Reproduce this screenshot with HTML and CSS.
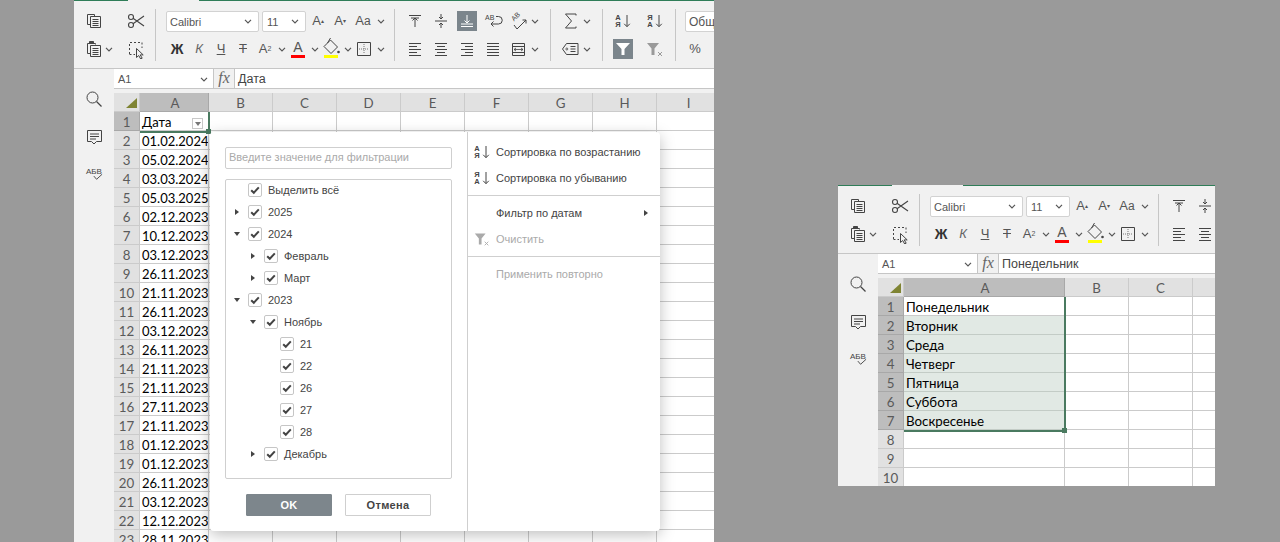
FILE: index.html
```html
<!DOCTYPE html>
<html lang="ru">
<head>
<meta charset="utf-8">
<title>Таблица</title>
<link rel="stylesheet" href="styles.css">
</head>
<body>
<svg class="defs" width="0" height="0" aria-hidden="true">
  <symbol id="chev" viewBox="0 0 8 5"><path d="M1 .8 4 3.8 7 .8" fill="none" stroke="currentColor" stroke-width="1.2"/></symbol>
  <symbol id="copy" viewBox="0 0 20 20"><g fill="none" stroke="currentColor"><path d="M6.500 13.500h-3v-10h7v2"/><path d="M6.500 5.500h10v11h-10z" fill="#f1f1f1"/><path d="M8.500 8.500h6M8.500 10.500h6M8.500 12.500h6M8.500 14.500h6"/></g></symbol>
  <symbol id="cut" viewBox="0 0 20 20"><g fill="none" stroke="currentColor" stroke-width="1.100"><circle cx="5" cy="6" r="2.500"/><circle cx="5" cy="14" r="2.500"/><path d="M7 7.200 18 15M7 12.800 18 5"/></g></symbol>
  <symbol id="paste" viewBox="0 0 20 20"><g fill="none" stroke="currentColor"><path d="M6.500 14.500h-3v-10h8v1"/><path d="M5.500 2.500h4v2h-4z" fill="currentColor"/><path d="M6.500 6.500h10v11h-10z" fill="#f1f1f1"/><path d="M8.500 9.500h6M8.500 11.500h6M8.500 13.500h6M8.500 15.500h6"/></g></symbol>
  <symbol id="selectall" viewBox="0 0 20 20"><path d="M3.500 15V3.500H16V9" fill="none" stroke="currentColor" stroke-dasharray="2 2"/><path d="M3.500 15.500H9" fill="none" stroke="currentColor" stroke-dasharray="2 2"/><path d="M10.500 9.500v9l2.200-2 2 3.500 1.500-.8-2-3.300h3z" fill="#f1f1f1" stroke="currentColor"/></symbol>
  <symbol id="fill" viewBox="0 0 20 20"><path d="M9.500 3 16.500 10 10 16.500 3 9.500z" fill="none" stroke="currentColor"/><path d="M6.500 6 9.500 1" stroke="currentColor"/><circle cx="17.500" cy="15" r="1.300" fill="currentColor"/></symbol>
  <symbol id="border" viewBox="0 0 20 20"><path d="M3.500 3.500h13v13h-13z" fill="none" stroke="currentColor"/><path d="M10 5v10M5 10h10" stroke="currentColor" stroke-dasharray="1 1" opacity=".7"/></symbol>
  <symbol id="atop" viewBox="0 0 20 20"><path d="M4 4.500h12M10 16V7M7.500 9.500 10 7l2.500 2.500M6 7h8" fill="none" stroke="currentColor"/></symbol>
  <symbol id="amid" viewBox="0 0 20 20"><path d="M4 10h12M10 3v5M8 6l2 2 2-2M10 17v-5M8 14l2-2 2 2" fill="none" stroke="currentColor"/></symbol>
  <symbol id="abot" viewBox="0 0 20 20"><path d="M4 15.500h12M4 13h12M10 4v8M7.500 9.500 10 12l2.500-2.500" fill="none" stroke="currentColor"/></symbol>
  <symbol id="wrap" viewBox="0 0 20 20"><text x="2" y="9" font-size="7" font-family="Liberation Sans, sans-serif" fill="currentColor">AB</text><path d="M13 5.500h2.500a3.500 3.500 0 0 1 0 7.500H8M10.500 10.500 8 13l2.500 2.500" fill="none" stroke="currentColor"/></symbol>
  <symbol id="orient" viewBox="0 0 20 20"><text x="0" y="0" transform="translate(5 10.500) rotate(-45)" font-size="7" font-family="Liberation Sans, sans-serif" fill="currentColor">AB</text><path d="M5 14l3 4M8 18l9-9M17 9h-3.500M17 9v3.500" fill="none" stroke="currentColor"/></symbol>
  <symbol id="aleft" viewBox="0 0 20 20"><path d="M4 4.500h12M4 7.500h8M4 10.500h12M4 13.500h8M4 16.500h12" fill="none" stroke="currentColor"/></symbol>
  <symbol id="acenter" viewBox="0 0 20 20"><path d="M4 4.500h12M6 7.500h8M4 10.500h12M6 13.500h8M4 16.500h12" fill="none" stroke="currentColor"/></symbol>
  <symbol id="aright" viewBox="0 0 20 20"><path d="M4 4.500h12M8 7.500h8M4 10.500h12M8 13.500h8M4 16.500h12" fill="none" stroke="currentColor"/></symbol>
  <symbol id="ajust" viewBox="0 0 20 20"><path d="M4 4.500h12M4 7.500h12M4 10.500h12M4 13.500h12M4 16.500h12" fill="none" stroke="currentColor"/></symbol>
  <symbol id="merge" viewBox="0 0 20 20"><path d="M3.500 4.500h12v12h-12zM3.500 7.500h12M3.500 13.500h12" fill="none" stroke="currentColor"/><path d="M5 10.500h9M7 9 5 10.500 7 12M12 9l2 1.500-2 1.500" fill="none" stroke="currentColor" stroke-width=".8"/></symbol>
  <symbol id="sum" viewBox="0 0 20 20"><path d="M15 4.500V3H4.500L10.500 10l-6 7H15v-1.500" fill="none" stroke="currentColor"/></symbol>
  <symbol id="tag" viewBox="0 0 20 20"><path d="M5.500 4.500h11.500v11H5.500L1.500 10z" fill="none" stroke="currentColor"/><path d="M9.500 7.500h5M9.500 10h5M9.500 12.500h5" stroke="currentColor"/><circle cx="5.800" cy="10" r="1" fill="none" stroke="currentColor" stroke-width=".8"/></symbol>
  <symbol id="funnel" viewBox="0 0 20 20"><path d="M3 4h14l-5.500 6v6h-3v-6z" fill="currentColor"/></symbol>
  <symbol id="funnelx" viewBox="0 0 20 20"><path d="M2 4h12L9.500 9.500V16h-3V9.500z" fill="currentColor"/><path d="M13 13l4 4M17 13l-4 4" stroke="currentColor" fill="none"/></symbol>
  <symbol id="search" viewBox="0 0 20 20"><circle cx="8.500" cy="8.500" r="5.500" fill="none" stroke="currentColor"/><path d="M12.500 12.500 17.500 17.500" stroke="currentColor" stroke-width="1.200"/></symbol>
  <symbol id="comment" viewBox="0 0 20 20"><path d="M3.500 3.500h14v11h-5L10 17l-2.500-2.500h-4z" fill="none" stroke="currentColor"/><path d="M6 7h9M6 9.500h9M6 12h6" stroke="currentColor"/></symbol>
  <symbol id="check" viewBox="0 0 14 14"><path d="M3.200 7.200 5.800 9.800 10.800 4.400" fill="none" stroke="currentColor" stroke-width="2"/></symbol>
  <symbol id="arrdown" viewBox="0 0 8 14"><path d="M4 1v11.500M1.200 9.800 4 12.700l2.800-2.900" fill="none" stroke="currentColor"/></symbol>
</svg>

<main class="stage">
  <section class="pane pane-left">
    <div class="topline"><i class="tl-a"></i><i class="tl-gap"></i><i class="tl-b"></i></div>
    <div class="toolbar">
      <div class="group g-clip">
        <div class="tool"><svg class="ic"><use href="#copy"/></svg></div><span></span><div class="tool"><svg class="ic"><use href="#cut"/></svg></div>
        <div class="tool"><svg class="ic"><use href="#paste"/></svg></div><span class="chev"><svg><use href="#chev"/></svg></span><div class="tool"><svg class="ic"><use href="#selectall"/></svg></div>
      </div>
      <div class="group g-font">
        <div class="row">
          <div class="combo c-font">Calibri<svg><use href="#chev"/></svg></div>
          <div class="combo c-size">11<svg><use href="#chev"/></svg></div>
          <div class="tool t22 glyph big">A<sup>▴</sup></div>
          <div class="tool t22 glyph">A<sup>▾</sup></div>
          <div class="tool t24 glyph big">A<small>a</small></div><span class="chev"><svg><use href="#chev"/></svg></span>
        </div>
        <div class="row">
          <div class="tool t22 glyph bold">Ж</div>
          <div class="tool t22 glyph ital">К</div>
          <div class="tool t22 glyph under">Ч</div>
          <div class="tool t22 glyph strike">Т</div>
          <div class="tool t22 glyph">A<sub>2</sub></div><span class="chev"><svg><use href="#chev"/></svg></span>
          <div class="tool t22 colored"><span class="glyph">A</span><i class="bar red"></i></div><span class="chev"><svg><use href="#chev"/></svg></span>
          <div class="tool t22 colored"><svg class="ic ic-up"><use href="#fill"/></svg><i class="bar yellow"></i></div><span class="chev"><svg><use href="#chev"/></svg></span>
          <div class="tool t22"><svg class="ic"><use href="#border"/></svg></div><span class="chev"><svg><use href="#chev"/></svg></span>
        </div>
      </div>
      <div class="group g-align">
        <div class="row">
          <div class="tool t26"><svg class="ic"><use href="#atop"/></svg></div>
          <div class="tool t26"><svg class="ic"><use href="#amid"/></svg></div>
          <div class="tool t26"><span class="active"><svg class="ic"><use href="#abot"/></svg></span></div>
          <div class="tool t26"><svg class="ic"><use href="#wrap"/></svg></div>
          <div class="tool t26"><svg class="ic"><use href="#orient"/></svg></div><span class="chev narrow"><svg><use href="#chev"/></svg></span>
        </div>
        <div class="row">
          <div class="tool t26"><svg class="ic"><use href="#aleft"/></svg></div>
          <div class="tool t26"><svg class="ic"><use href="#acenter"/></svg></div>
          <div class="tool t26"><svg class="ic"><use href="#aright"/></svg></div>
          <div class="tool t26"><svg class="ic"><use href="#ajust"/></svg></div>
          <div class="tool t26"><svg class="ic"><use href="#merge"/></svg></div><span class="chev narrow"><svg><use href="#chev"/></svg></span>
        </div>
      </div>
      <div class="group g-sum">
        <div class="row"><div class="tool t26"><svg class="ic"><use href="#sum"/></svg></div><span class="chev narrow"><svg><use href="#chev"/></svg></span></div>
        <div class="row"><div class="tool t26"><svg class="ic"><use href="#tag"/></svg></div><span class="chev narrow"><svg><use href="#chev"/></svg></span></div>
      </div>
      <div class="group g-sort">
        <div class="row">
          <div class="tool t20 sorticon"><span class="az">A<br>Я</span><svg class="arr"><use href="#arrdown"/></svg></div>
          <div class="tool t20 sorticon"><span class="az">Я<br>A</span><svg class="arr"><use href="#arrdown"/></svg></div>
        </div>
        <div class="row">
          <div class="tool t20"><span class="active"><svg class="ic white"><use href="#funnel"/></svg></span></div>
          <div class="tool t20 muted"><svg class="ic"><use href="#funnelx"/></svg></div>
        </div>
      </div>
      <div class="group g-num">
        <div class="row"><div class="combo c-num">Общий</div></div>
        <div class="row"><div class="tool t20 glyph percent">%</div></div>
      </div>
    </div>
    <div class="workspace">
      <aside class="sidebar">
        <svg class="ic side-search"><use href="#search"/></svg>
        <svg class="ic side-comment"><use href="#comment"/></svg>
        <div class="side-spell">АБВ<svg viewBox="0 0 12 8"><path d="M2 3 5 6.500 11 1" fill="none" stroke="currentColor"/></svg></div>
      </aside>
      <div class="content">
        <div class="formula">
          <div class="namebox">A1<svg><use href="#chev"/></svg></div>
          <div class="fx">fx</div>
          <div class="fvalue">Дата</div>
        </div>
        <div class="strip"></div>
        <div class="sheet-wrap">
          <table class="sheet sheet-l">
            <colgroup><col class="c-h"><col class="c-a"><col class="c-n"><col class="c-n"><col class="c-n"><col class="c-n"><col class="c-n"><col class="c-n"><col class="c-n"><col class="c-n"></colgroup>
            <tr><th class="corner"><i></i></th><th class="on">A</th><th>B</th><th>C</th><th>D</th><th>E</th><th>F</th><th>G</th><th>H</th><th>I</th></tr>
            <tr><th class="on">1</th><td class="hascaret">Дата<span class="caret"></span></td><td></td><td></td><td></td><td></td><td></td><td></td><td></td><td></td></tr>
            <tr><th>2</th><td>01.02.2024</td><td></td><td></td><td></td><td></td><td></td><td></td><td></td><td></td></tr>
            <tr><th>3</th><td>05.02.2024</td><td></td><td></td><td></td><td></td><td></td><td></td><td></td><td></td></tr>
            <tr><th>4</th><td>03.03.2024</td><td></td><td></td><td></td><td></td><td></td><td></td><td></td><td></td></tr>
            <tr><th>5</th><td>05.03.2025</td><td></td><td></td><td></td><td></td><td></td><td></td><td></td><td></td></tr>
            <tr><th>6</th><td>02.12.2023</td><td></td><td></td><td></td><td></td><td></td><td></td><td></td><td></td></tr>
            <tr><th>7</th><td>10.12.2023</td><td></td><td></td><td></td><td></td><td></td><td></td><td></td><td></td></tr>
            <tr><th>8</th><td>03.12.2023</td><td></td><td></td><td></td><td></td><td></td><td></td><td></td><td></td></tr>
            <tr><th>9</th><td>26.11.2023</td><td></td><td></td><td></td><td></td><td></td><td></td><td></td><td></td></tr>
            <tr><th>10</th><td>21.11.2023</td><td></td><td></td><td></td><td></td><td></td><td></td><td></td><td></td></tr>
            <tr><th>11</th><td>26.11.2023</td><td></td><td></td><td></td><td></td><td></td><td></td><td></td><td></td></tr>
            <tr><th>12</th><td>03.12.2023</td><td></td><td></td><td></td><td></td><td></td><td></td><td></td><td></td></tr>
            <tr><th>13</th><td>26.11.2023</td><td></td><td></td><td></td><td></td><td></td><td></td><td></td><td></td></tr>
            <tr><th>14</th><td>21.11.2023</td><td></td><td></td><td></td><td></td><td></td><td></td><td></td><td></td></tr>
            <tr><th>15</th><td>21.11.2023</td><td></td><td></td><td></td><td></td><td></td><td></td><td></td><td></td></tr>
            <tr><th>16</th><td>27.11.2023</td><td></td><td></td><td></td><td></td><td></td><td></td><td></td><td></td></tr>
            <tr><th>17</th><td>21.11.2023</td><td></td><td></td><td></td><td></td><td></td><td></td><td></td><td></td></tr>
            <tr><th>18</th><td>01.12.2023</td><td></td><td></td><td></td><td></td><td></td><td></td><td></td><td></td></tr>
            <tr><th>19</th><td>01.12.2023</td><td></td><td></td><td></td><td></td><td></td><td></td><td></td><td></td></tr>
            <tr><th>20</th><td>26.11.2023</td><td></td><td></td><td></td><td></td><td></td><td></td><td></td><td></td></tr>
            <tr><th>21</th><td>03.12.2023</td><td></td><td></td><td></td><td></td><td></td><td></td><td></td><td></td></tr>
            <tr><th>22</th><td>12.12.2023</td><td></td><td></td><td></td><td></td><td></td><td></td><td></td><td></td></tr>
            <tr><th>23</th><td>28.11.2023</td><td></td><td></td><td></td><td></td><td></td><td></td><td></td><td></td></tr>
          </table>
          <div class="selection sel-left"><i></i></div>
        </div>
      </div>
    </div>

    <div class="dialog">
      <div class="dlg-main">
        <div class="dlg-search">Введите значение для фильтрации</div>
        <div class="tree">
          <div class="tree-in">
            <div class="node l0"><i class="tw"></i><span class="cb"><svg><use href="#check"/></svg></span>Выделить всё</div>
            <div class="node l0"><i class="tw closed"></i><span class="cb"><svg><use href="#check"/></svg></span>2025</div>
            <div class="node l0"><i class="tw open"></i><span class="cb"><svg><use href="#check"/></svg></span>2024</div>
            <div class="node l1"><i class="tw closed"></i><span class="cb"><svg><use href="#check"/></svg></span>Февраль</div>
            <div class="node l1"><i class="tw closed"></i><span class="cb"><svg><use href="#check"/></svg></span>Март</div>
            <div class="node l0"><i class="tw open"></i><span class="cb"><svg><use href="#check"/></svg></span>2023</div>
            <div class="node l1"><i class="tw open"></i><span class="cb"><svg><use href="#check"/></svg></span>Ноябрь</div>
            <div class="node l2"><i class="tw"></i><span class="cb"><svg><use href="#check"/></svg></span>21</div>
            <div class="node l2"><i class="tw"></i><span class="cb"><svg><use href="#check"/></svg></span>22</div>
            <div class="node l2"><i class="tw"></i><span class="cb"><svg><use href="#check"/></svg></span>26</div>
            <div class="node l2"><i class="tw"></i><span class="cb"><svg><use href="#check"/></svg></span>27</div>
            <div class="node l2"><i class="tw"></i><span class="cb"><svg><use href="#check"/></svg></span>28</div>
            <div class="node l1"><i class="tw closed"></i><span class="cb"><svg><use href="#check"/></svg></span>Декабрь</div>
          </div>
        </div>
        <div class="dlg-buttons">
          <button class="btn primary">OK</button>
          <button class="btn">Отмена</button>
        </div>
      </div>
      <div class="dlg-menu">
        <div class="mi"><span class="mi-ic sorticon"><span class="az">A<br>Я</span><svg class="arr"><use href="#arrdown"/></svg></span>Сортировка по возрастанию</div>
        <div class="mi"><span class="mi-ic sorticon"><span class="az">Я<br>A</span><svg class="arr"><use href="#arrdown"/></svg></span>Сортировка по убыванию</div>
        <hr class="sep">
        <div class="mi"><span class="mi-ic"></span>Фильтр по датам<i class="submenu"></i></div>
        <div class="mi off"><span class="mi-ic"><svg class="ic"><use href="#funnelx"/></svg></span>Очистить</div>
        <hr class="sep">
        <div class="mi off"><span class="mi-ic"></span>Применить повторно</div>
      </div>
    </div>
  </section>

  <section class="pane pane-right">
    <div class="topline"><i class="tl-a"></i><i class="tl-gap"></i><i class="tl-b"></i></div>
    <div class="toolbar">
      <div class="group g-clip">
        <div class="tool"><svg class="ic"><use href="#copy"/></svg></div><span></span><div class="tool"><svg class="ic"><use href="#cut"/></svg></div>
        <div class="tool"><svg class="ic"><use href="#paste"/></svg></div><span class="chev"><svg><use href="#chev"/></svg></span><div class="tool"><svg class="ic"><use href="#selectall"/></svg></div>
      </div>
      <div class="group g-font">
        <div class="row">
          <div class="combo c-font">Calibri<svg><use href="#chev"/></svg></div>
          <div class="combo c-size">11<svg><use href="#chev"/></svg></div>
          <div class="tool t22 glyph big">A<sup>▴</sup></div>
          <div class="tool t22 glyph">A<sup>▾</sup></div>
          <div class="tool t24 glyph big">A<small>a</small></div><span class="chev"><svg><use href="#chev"/></svg></span>
        </div>
        <div class="row">
          <div class="tool t22 glyph bold">Ж</div>
          <div class="tool t22 glyph ital">К</div>
          <div class="tool t22 glyph under">Ч</div>
          <div class="tool t22 glyph strike">Т</div>
          <div class="tool t22 glyph">A<sub>2</sub></div><span class="chev"><svg><use href="#chev"/></svg></span>
          <div class="tool t22 colored"><span class="glyph">A</span><i class="bar red"></i></div><span class="chev"><svg><use href="#chev"/></svg></span>
          <div class="tool t22 colored"><svg class="ic ic-up"><use href="#fill"/></svg><i class="bar yellow"></i></div><span class="chev"><svg><use href="#chev"/></svg></span>
          <div class="tool t22"><svg class="ic"><use href="#border"/></svg></div><span class="chev"><svg><use href="#chev"/></svg></span>
        </div>
      </div>
      <div class="group g-align">
        <div class="row">
          <div class="tool t26"><svg class="ic"><use href="#atop"/></svg></div>
          <div class="tool t26"><svg class="ic"><use href="#amid"/></svg></div>
        </div>
        <div class="row">
          <div class="tool t26"><svg class="ic"><use href="#aleft"/></svg></div>
          <div class="tool t26"><svg class="ic"><use href="#acenter"/></svg></div>
        </div>
      </div>
    </div>
    <div class="workspace">
      <aside class="sidebar">
        <svg class="ic side-search"><use href="#search"/></svg>
        <svg class="ic side-comment"><use href="#comment"/></svg>
        <div class="side-spell">АБВ<svg viewBox="0 0 12 8"><path d="M2 3 5 6.500 11 1" fill="none" stroke="currentColor"/></svg></div>
      </aside>
      <div class="content">
        <div class="formula">
          <div class="namebox">A1<svg><use href="#chev"/></svg></div>
          <div class="fx">fx</div>
          <div class="fvalue">Понедельник</div>
        </div>
        <div class="strip"></div>
        <div class="sheet-wrap">
          <table class="sheet sheet-r">
            <colgroup><col class="c-h"><col class="c-wide"><col class="c-n"><col class="c-n"><col class="c-n"></colgroup>
            <tr><th class="corner"><i></i></th><th class="on">A</th><th>B</th><th>C</th><th></th></tr>
            <tr><th class="on">1</th><td>Понедельник</td><td></td><td></td><td></td></tr>
            <tr><th class="on">2</th><td class="picked">Вторник</td><td></td><td></td><td></td></tr>
            <tr><th class="on">3</th><td class="picked">Среда</td><td></td><td></td><td></td></tr>
            <tr><th class="on">4</th><td class="picked">Четверг</td><td></td><td></td><td></td></tr>
            <tr><th class="on">5</th><td class="picked">Пятница</td><td></td><td></td><td></td></tr>
            <tr><th class="on">6</th><td class="picked">Суббота</td><td></td><td></td><td></td></tr>
            <tr><th class="on">7</th><td class="picked">Воскресенье</td><td></td><td></td><td></td></tr>
            <tr><th>8</th><td></td><td></td><td></td><td></td></tr>
            <tr><th>9</th><td></td><td></td><td></td><td></td></tr>
            <tr><th>10</th><td></td><td></td><td></td><td></td></tr>
          </table>
          <div class="selection sel-right"><i></i></div>
        </div>
      </div>
    </div>
  </section>
</main>
</body>
</html>
```
FILE: styles.css
```css
* { box-sizing: border-box; }
html, body { margin: 0; height: 100%; overflow: hidden; }
body { background: #9a9a9a; font-family: "Liberation Sans", Arial, sans-serif; font-size: 11px; color: #444; }
.defs { position: absolute; }
.stage { display: flex; align-items: flex-start; height: 542px; padding-left: 74px; }

.pane { position: relative; background: #f1f1f1; overflow: hidden; flex: none; }
.pane-left { width: 640px; height: 542px; }
.pane-right { width: 377px; height: 301px; margin: 185px 0 0 124px; }

.topline { display: flex; height: 1px; }
.tl-a { width: 54px; background: #2f7d58; }
.tl-gap { width: 71px; }
.tl-b { flex: 1; background: #2f7d58; }

.toolbar { display: flex; height: 68px; border-bottom: 1px solid #c6c6c6; padding-top: 10px; }
.group { position: relative; flex: none; height: 48px; display: flex; flex-direction: column; gap: 8px; padding-left: 7px; }
.group + .group::before { content: ""; position: absolute; left: -1px; top: -2px; height: 52px; width: 1px; background: #c6c6c6; }
.g-clip { display: grid; grid-template-columns: 26px 16px 26px; grid-auto-rows: 20px; gap: 8px 0; width: 81px; margin-right: 1px; }
.g-font { width: 238px; padding-left: 10px; margin-right: 1px; }
.g-align { width: 155px; margin-right: 1px; }
.g-sum { width: 51px; margin-right: 1px; }
.g-sort { width: 72px; padding-left: 10px; margin-right: 1px; }
.g-num { width: 100px; padding-left: 9px; }
.g-sort .row { gap: 12px; }

.row { display: flex; align-items: center; height: 20px; flex: none; }
.tool { height: 20px; display: flex; align-items: center; justify-content: center; flex: none; position: relative; color: #444; }
.t20 { width: 20px; }
.t22 { width: 22px; }
.t24 { width: 24px; }
.t26 { width: 26px; }
.ic { width: 20px; height: 20px; display: block; flex: none; color: #444; }
.ic-up { margin-top: -4px; }
.white { color: #fff; }
.muted, .muted .ic { color: #9a9a9a; }
.active { width: 20px; height: 20px; background: #7b858c; display: flex; align-items: center; justify-content: center; }
.active .ic { color: #fff; }

.chev { display: flex; align-items: center; justify-content: center; width: 11px; height: 20px; flex: none; color: #555; }
.chev svg { width: 8px; height: 5px; flex: none; }
.chev.narrow { width: 6px; }
.g-clip .chev { width: 16px; justify-content: flex-start; }
.g-clip .chev svg { margin-left: -2px; }

.combo { display: flex; align-items: center; justify-content: space-between; height: 21px; background: #fff; border: 1px solid #d2d2d2; border-radius: 2px; color: #555; font-size: 11px; padding: 0 6px 0 3px; flex: none; margin-top: 1px; }
.combo svg { width: 8px; height: 5px; flex: none; }
.c-font { width: 93px; margin-right: 3px; }
.c-size { width: 44px; margin-right: 1px; padding-left: 4px; }
.c-num { width: 120px; font-size: 12px; }

.glyph { font-size: 13px; color: #555; line-height: 20px; }
.glyph.big { font-size: 13px; }
.glyph sup { font-size: 6px; line-height: 0; vertical-align: 7px; }
.glyph sub { font-size: 7px; line-height: 0; vertical-align: -2px; }
.glyph small { font-size: 12px; }
.bold { font-weight: 700; font-size: 14px; color: #333; }
.ital { font-style: italic; color: #666; }
.under { text-decoration: underline; }
.strike { text-decoration: line-through; }
.percent { font-size: 13px; }
.colored { flex-direction: column; }
.colored .glyph { margin-top: -4px; font-size: 14px; }
.bar { position: absolute; left: 4px; bottom: 1px; width: 14px; height: 3px; }
.red { background: #f00; }
.yellow { background: #ff0; }

.sorticon { display: flex; align-items: center; justify-content: center; gap: 2px; }
.az { font-size: 7.500px; line-height: 7.500px; font-weight: 700; text-align: center; color: #444; }
.arr { width: 8px; height: 14px; color: #444; flex: none; }

.workspace { display: flex; height: calc(100% - 69px); }
.sidebar { width: 40px; flex: none; display: flex; flex-direction: column; align-items: center; color: #444; }
.side-search { margin-top: 20px; }
.side-comment { margin-top: 18px; }
.side-spell { margin-top: 21px; font-size: 8px; line-height: 8px; width: 20px; text-align: center; position: relative; height: 14px; }
.side-spell svg { position: absolute; left: 8px; top: 5px; width: 11px; height: 8px; }

.content { flex: 1; min-width: 0; }
.formula { display: flex; height: 20px; background: #fff; border-bottom: 1px solid #c6c6c6; width: 100%; }
.namebox { width: 100px; display: flex; align-items: center; justify-content: space-between; padding: 1px 5px 0 4px; font-size: 11px; color: #555; flex: none; border-right: 1px solid #c6c6c6; }
.namebox svg { width: 8px; height: 5px; }
.fx { width: 21px; flex: none; background: #f1f1f1; border-right: 1px solid #c6c6c6; font: italic 16px/18px "Liberation Serif", serif; text-align: center; color: #666; }
.fvalue { flex: 1; padding: 1px 0 0 3px; font-size: 12.500px; line-height: 18px; color: #444; }
.strip { height: 4px; background: #f1f1f1; }

.sheet-wrap { position: relative; }
.sheet { border-collapse: separate; border-spacing: 0; table-layout: fixed; background: #fff; font-family: Lato, sans-serif; }
.sheet-l { width: 607px; }
.sheet-r { width: 379px; }
.c-h { width: 26px; }
.c-a { width: 69px; }
.c-wide { width: 161px; }
.c-n { width: 64px; }
.sheet th, .sheet td { height: 19px; padding: 2px 0 0; border-right: 1px solid #cbcbcb; border-bottom: 1px solid #cbcbcb; overflow: hidden; white-space: nowrap; line-height: 16px; }
.sheet th { background: #e1e1e1; font-weight: 400; font-size: 13.330px; color: #5a5a5a; text-align: center; }
.sheet th.on { background: #bdbdbd; border-color: #a8a8a8; }
.sheet td { font-size: 13.330px; color: #000; padding-left: 2px; }
.sheet-l td { font-size: 13px; }
.sheet tr:first-child th.on { padding-left: 2px; }
.sheet td.picked { background: #e1e9e4; border-bottom-color: #c3ccc6; border-right-color: #fff; }
.corner { position: relative; }
.corner i { position: absolute; right: 2px; bottom: 3px; width: 0; height: 0; border-left: 11px solid transparent; border-bottom: 10px solid #7f8433; }
.hascaret { position: relative; }
.caret { position: absolute; right: 5px; top: 6px; width: 11px; height: 11px; border: 1px solid #c8c8c8; background: #fff; }
.caret::after { content: ""; position: absolute; left: 1.500px; top: 3px; border-left: 3px solid transparent; border-right: 3px solid transparent; border-top: 4px solid #777; }

.selection { position: absolute; border-right: 2px solid #4a7a60; border-bottom: 2px solid #4a7a60; pointer-events: none; }
.selection i { position: absolute; right: -3px; bottom: -3px; width: 5px; height: 5px; background: #4a7a60; }
.sel-left { left: 26px; top: 19px; width: 70px; height: 21px; }
.sel-right { left: 26px; top: 19px; width: 162px; height: 135px; }

.dialog { position: absolute; left: 136px; top: 132px; width: 450px; height: 399px; background: #fff; border-radius: 4px; display: flex; box-shadow: 0 4px 15px rgba(0, 0, 0, .25); color: #444; }
.dlg-main { width: 258px; flex: none; border-right: 1px solid #cfcfcf; padding: 15px 0 0 15px; }
.dlg-search { width: 227px; height: 22px; border: 1px solid #cfcfcf; border-radius: 2px; color: #aaa; font-size: 11px; line-height: 19px; padding-left: 3px; }
.tree { width: 227px; height: 300px; margin-top: 10px; border: 1px solid #cfcfcf; border-radius: 2px; }
.tree-in { margin-top: -1px; }
.node { display: flex; align-items: center; height: 22px; font-size: 11px; color: #444; }
.l0 { padding-left: 7px; }
.l1 { padding-left: 23px; }
.l2 { padding-left: 39px; }
.tw { width: 15px; height: 22px; flex: none; position: relative; }
.tw.closed::after { content: ""; position: absolute; left: 2px; top: 8px; border-top: 3px solid transparent; border-bottom: 3px solid transparent; border-left: 4px solid #444; }
.tw.open::after { content: ""; position: absolute; left: 1px; top: 9px; border-left: 3.500px solid transparent; border-right: 3.500px solid transparent; border-top: 4px solid #444; }
.cb { width: 14px; height: 14px; flex: none; border: 1px solid #c6c6c6; border-radius: 2px; margin-right: 6px; background: #fff; display: flex; align-items: center; justify-content: center; color: #444; }
.cb svg { width: 14px; height: 14px; flex: none; }
.dlg-buttons { display: flex; gap: 13px; margin: 15px 0 0 21px; }
.btn { width: 86px; height: 22px; border: 1px solid #cfcfcf; background: #fff; font: 700 11px/20px "Liberation Sans", Arial, sans-serif; letter-spacing: .3px; color: #444; padding: 0; border-radius: 1px; }
.btn.primary { background: #7d868c; border-color: #7d868c; color: #fff; }
.dlg-menu { flex: 1; padding-top: 7px; }
.mi { display: flex; align-items: center; height: 26px; font-size: 11px; color: #444; position: relative; }
.mi.off { color: #aaa; }
.mi-ic { width: 28px; flex: none; display: flex; justify-content: center; color: #444; }
.off .mi-ic .ic { color: #aaa; width: 18px; height: 18px; }
.submenu { position: absolute; right: 12px; top: 10px; border-top: 3px solid transparent; border-bottom: 3px solid transparent; border-left: 4px solid #444; }
.sep { border: 0; border-top: 1px solid #cfcfcf; margin: 4px 0; height: 0; }
```
